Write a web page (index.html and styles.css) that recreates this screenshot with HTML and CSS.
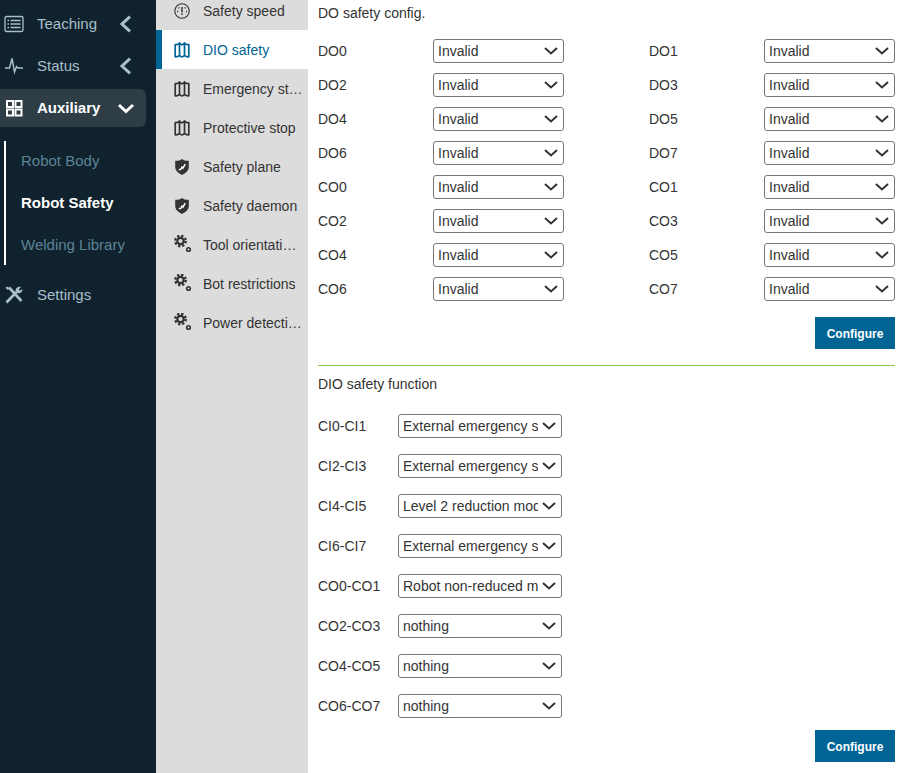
FILE: index.html
```html
<!DOCTYPE html>
<html lang="en">
<head>
    <meta charset="UTF-8">
    <meta name="viewport" content="width=device-width, initial-scale=1.0">
    <title>Robot Safety</title>
    <link rel="stylesheet" href="styles.css">
</head>
<body>

<!-- Shared icons for the safety menu -->
<svg class="icon-defs" aria-hidden="true">
    <symbol id="icon-map" viewBox="0 0 16 16">
        <path d="M1.200 2.500 C3 2.800 4.500 2.200 5.500 1 C6.500 2.200 7 2.800 8 2.800 C9 2.800 9.500 2.200 10.500 1 C11.500 2.200 13 2.800 14.800 2.500 V14.800 C13 15 11.500 14.500 10.500 13.300 C9.500 14.500 9 15 8 15 C7 15 6.500 14.500 5.500 13.300 C4.500 14.500 3 15 1.200 14.800 Z M5.500 1 V13.300 M10.500 1 V13.300" fill="none" stroke="currentColor" stroke-width="1.700" stroke-linejoin="round"/>
    </symbol>
    <symbol id="icon-shield" viewBox="0 0 16 16">
        <path d="M8 0 C9.500 1.300 11.500 1.800 14.800 1.800 V8 C14.800 11.800 11.500 14.300 8 16 C4.500 14.300 1.200 11.800 1.200 8 V1.800 C4.500 1.800 6.500 1.300 8 0 Z" fill="currentColor"/>
        <path d="M4.800 10.800 L7 10.200 L8 8.200 L9 9 L11.200 5.200" fill="none" stroke="#fff" stroke-width="1.500"/>
    </symbol>
    <symbol id="icon-gears" viewBox="0 0 18 18">
        <circle cx="6.500" cy="6" r="3.200" fill="none" stroke="currentColor" stroke-width="2.200"/>
        <circle cx="6.500" cy="6" r="5.200" fill="none" stroke="currentColor" stroke-width="2.400" stroke-dasharray="2.300 1.784"/>
        <circle cx="14.500" cy="14.500" r="1.800" fill="none" stroke="currentColor" stroke-width="1.600"/>
    </symbol>
</svg>

<!-- Main navigation -->
<nav class="sidebar">
    <div class="nav-row">
        <svg class="nav-icon" viewBox="0 0 20 20"><rect x="1" y="2.500" width="18" height="15" rx="1.500" fill="none" stroke="currentColor" stroke-width="1.300"/><path d="M3.500 6.500 H5 M3.500 10 H5 M3.500 13.500 H5 M6.500 6.500 H16.500 M6.500 10 H16.500 M6.500 13.500 H16.500" stroke="currentColor" stroke-width="1.300"/></svg>
        <span class="nav-label">Teaching</span>
        <svg class="nav-chevron" viewBox="0 0 18 18"><path d="M13 1.700 L5 9 L13 16.300" fill="none" stroke="currentColor" stroke-width="3"/></svg>
    </div>
    <div class="nav-row">
        <svg class="nav-icon" viewBox="0 0 20 20"><path d="M1 12 H5.500 L8 2.500 L10.500 16 L12.500 10.500 L14 12 H19" fill="none" stroke="currentColor" stroke-width="1.500"/></svg>
        <span class="nav-label">Status</span>
        <svg class="nav-chevron" viewBox="0 0 18 18"><path d="M13 1.700 L5 9 L13 16.300" fill="none" stroke="currentColor" stroke-width="3"/></svg>
    </div>
    <div class="nav-row nav-row-open">
        <svg class="nav-icon" viewBox="0 0 20 20"><path d="M3 3 H9 V9 H3 Z M11.500 3 H17.500 V9 H11.500 Z M3 11.500 H9 V17.500 H3 Z M11.500 11.500 H17.500 V17.500 H11.500 Z" fill="none" stroke="currentColor" stroke-width="2"/></svg>
        <span class="nav-label">Auxiliary</span>
        <svg class="nav-chevron" viewBox="0 0 18 18"><path d="M2 6 L9 12.500 L16 6" fill="none" stroke="currentColor" stroke-width="3"/></svg>
    </div>
    <div class="submenu">
        <div class="submenu-item">Robot Body</div>
        <div class="submenu-item submenu-item-active">Robot Safety</div>
        <div class="submenu-item">Welding Library</div>
    </div>
    <div class="nav-row nav-row-settings">
        <svg class="nav-icon" viewBox="0 0 20 20"><path d="M2.500 17.500 L13 6.500 M5 2.500 L17.500 16" fill="none" stroke="currentColor" stroke-width="2.600"/><path d="M11.500 5 C12 2.500 14.500 1 17 2 L14.800 4.200 L16 5.800 L18.300 4 C18.800 6.500 16.500 9 13.500 8 Z M2.500 1.500 L5.500 3 L4 5 L1.500 3 Z" fill="currentColor"/></svg>
        <span class="nav-label">Settings</span>
    </div>
</nav>

<!-- Safety sub pages -->
<aside class="safety-menu">
    <ul class="safety-list">
        <li class="safety-item">
            <svg class="safety-icon" viewBox="0 0 16 16"><circle cx="8" cy="8" r="7.200" fill="none" stroke="currentColor" stroke-width="1.100"/><path d="M8 4 V9.500 M8 10.600 V12 M4.500 4.500 L5.300 5.300 M11.500 4.500 L10.700 5.300 M3 8.500 H4 M13 8.500 H12" fill="none" stroke="currentColor" stroke-width="1.400"/></svg>
            <span class="safety-label">Safety speed</span>
        </li>
        <li class="safety-item safety-item-active">
            <svg class="safety-icon"><use href="#icon-map"/></svg>
            <span class="safety-label">DIO safety</span>
        </li>
        <li class="safety-item">
            <svg class="safety-icon"><use href="#icon-map"/></svg>
            <span class="safety-label">Emergency st…</span>
        </li>
        <li class="safety-item">
            <svg class="safety-icon"><use href="#icon-map"/></svg>
            <span class="safety-label">Protective stop</span>
        </li>
        <li class="safety-item">
            <svg class="safety-icon"><use href="#icon-shield"/></svg>
            <span class="safety-label">Safety plane</span>
        </li>
        <li class="safety-item">
            <svg class="safety-icon"><use href="#icon-shield"/></svg>
            <span class="safety-label">Safety daemon</span>
        </li>
        <li class="safety-item">
            <svg class="safety-icon safety-icon-up"><use href="#icon-gears"/></svg>
            <span class="safety-label">Tool orientati…</span>
        </li>
        <li class="safety-item">
            <svg class="safety-icon safety-icon-up"><use href="#icon-gears"/></svg>
            <span class="safety-label">Bot restrictions</span>
        </li>
        <li class="safety-item">
            <svg class="safety-icon safety-icon-up"><use href="#icon-gears"/></svg>
            <span class="safety-label">Power detecti…</span>
        </li>
    </ul>
</aside>

<main class="content">
    <!-- DO outputs -->
    <h2 class="section-title">DO safety config.</h2>
    <form class="do-grid">
        <div class="do-pair"><label>DO0</label><select><option>Invalid</option></select></div>
        <div class="do-pair"><label>DO1</label><select><option>Invalid</option></select></div>
        <div class="do-pair"><label>DO2</label><select><option>Invalid</option></select></div>
        <div class="do-pair"><label>DO3</label><select><option>Invalid</option></select></div>
        <div class="do-pair"><label>DO4</label><select><option>Invalid</option></select></div>
        <div class="do-pair"><label>DO5</label><select><option>Invalid</option></select></div>
        <div class="do-pair"><label>DO6</label><select><option>Invalid</option></select></div>
        <div class="do-pair"><label>DO7</label><select><option>Invalid</option></select></div>
        <div class="do-pair"><label>CO0</label><select><option>Invalid</option></select></div>
        <div class="do-pair"><label>CO1</label><select><option>Invalid</option></select></div>
        <div class="do-pair"><label>CO2</label><select><option>Invalid</option></select></div>
        <div class="do-pair"><label>CO3</label><select><option>Invalid</option></select></div>
        <div class="do-pair"><label>CO4</label><select><option>Invalid</option></select></div>
        <div class="do-pair"><label>CO5</label><select><option>Invalid</option></select></div>
        <div class="do-pair"><label>CO6</label><select><option>Invalid</option></select></div>
        <div class="do-pair"><label>CO7</label><select><option>Invalid</option></select></div>
    </form>
    <div class="actions actions-first">
        <button type="button">Configure</button>
    </div>

    <hr class="divider">

    <!-- DIO functions -->
    <h2 class="section-title">DIO safety function</h2>
    <form class="function-grid">
        <label>CI0-CI1</label><select><option>External emergency stop</option></select>
        <label>CI2-CI3</label><select><option>External emergency stop</option></select>
        <label>CI4-CI5</label><select><option>Level 2 reduction mode</option></select>
        <label>CI6-CI7</label><select><option>External emergency stop</option></select>
        <label>CO0-CO1</label><select><option>Robot non-reduced mode</option></select>
        <label>CO2-CO3</label><select><option>nothing</option></select>
        <label>CO4-CO5</label><select><option>nothing</option></select>
        <label>CO6-CO7</label><select><option>nothing</option></select>
    </form>
    <div class="actions actions-last">
        <button type="button">Configure</button>
    </div>
</main>

</body>
</html>
```

FILE: styles.css
```css
html, body {
    height: 100%;
}

body {
    font-family: "Liberation Sans", Arial, sans-serif;
    font-size: 14px;
    color: #333;
    margin: 0;
    display: flex;
    height: 773px;
    overflow: hidden;
    background-color: #fff;
}

.icon-defs {
    display: none;
}

/* Main navigation */
.sidebar {
    width: 156px;
    flex-shrink: 0;
    box-sizing: border-box;
    padding-top: 5px;
    background-color: #0f222d;
    color: #a9bfca;
}

.nav-row {
    display: flex;
    align-items: center;
    width: 146px;
    height: 38px;
    margin-bottom: 4px;
    box-sizing: border-box;
    padding-left: 4px;
    border-radius: 0 6px 6px 0;
    font-size: 15px;
}

.nav-row-open {
    background-color: #2f3e46;
    color: #fff;
    font-weight: bold;
    margin-bottom: 0;
}

.nav-row-settings {
    margin-top: 11px;
}

.nav-label {
    margin-bottom: 2px;
}

.nav-icon {
    width: 20px;
    height: 20px;
    margin-right: 13px;
    flex-shrink: 0;
}

.nav-chevron {
    width: 18px;
    height: 18px;
    margin-left: auto;
    margin-right: 11px;
}

.submenu {
    display: flex;
    flex-direction: column;
    gap: 2px;
    margin: 14px 0 0 4px;
    padding-left: 15px;
    border-left: 2px solid #fff;
}

.submenu-item {
    height: 40px;
    line-height: 40px;
    color: #5d8397;
    font-size: 15px;
    white-space: nowrap;
}

.submenu-item-active {
    color: #fff;
    font-weight: bold;
}

/* Safety pages list */
.safety-menu {
    width: 152px;
    flex-shrink: 0;
    background-color: #dcdcdc;
    overflow: hidden;
}

.safety-list {
    list-style: none;
    margin: -9px 0 0;
    padding: 0;
}

.safety-item {
    display: flex;
    align-items: center;
    height: 39px;
    box-sizing: border-box;
    padding-left: 12px;
    padding-right: 6px;
    border-left: 6px solid transparent;
}

.safety-item-active {
    background-color: #fff;
    border-left-color: #006494;
    color: #006494;
}

.safety-icon {
    width: 16px;
    height: 16px;
    margin-right: 13px;
    flex-shrink: 0;
}

.safety-icon-up {
    width: 18px;
    height: 18px;
    margin-right: 11px;
    margin-bottom: 2px;
}

.safety-label {
    white-space: nowrap;
}

/* Forms */
.content {
    flex: 1;
    padding: 3px 6px 0 10px;
}

.section-title {
    margin: 0;
    font-size: 14px;
    font-weight: normal;
    line-height: 20px;
}

select {
    appearance: none;
    width: 100%;
    height: 24px;
    box-sizing: border-box;
    padding: 0 23px 0 4px;
    border: 1px solid #767676;
    border-radius: 3px;
    font-family: "Liberation Sans", Arial, sans-serif;
    font-size: 14px;
    color: #333;
    background: #fff url("data:image/svg+xml,%3Csvg xmlns='http://www.w3.org/2000/svg' width='14' height='8'%3E%3Cpath d='M1 1l6 5.500 6-5.500' fill='none' stroke='%23333' stroke-width='2'/%3E%3C/svg%3E") no-repeat right 5px center;
}

.do-grid {
    display: grid;
    grid-template-columns: 246px 246px;
    justify-content: space-between;
    row-gap: 10px;
    margin-top: 16px;
}

.do-pair {
    display: grid;
    grid-template-columns: 115px 131px;
    align-items: center;
}

.function-grid {
    display: grid;
    grid-template-columns: 80px 164px;
    align-items: center;
    row-gap: 16px;
    margin-top: 20px;
}

.actions {
    display: flex;
    justify-content: flex-end;
}

.actions-first {
    margin-top: 16px;
}

.actions-last {
    margin-top: 12px;
}

button {
    width: 80px;
    height: 32px;
    padding: 1px 0 0;
    border: none;
    background-color: #006494;
    color: #fff;
    font-family: "Liberation Sans", Arial, sans-serif;
    font-size: 12px;
    font-weight: bold;
}

.divider {
    height: 1px;
    margin: 16px 0 8px;
    border: none;
    background-color: #8bc34a;
}
```
